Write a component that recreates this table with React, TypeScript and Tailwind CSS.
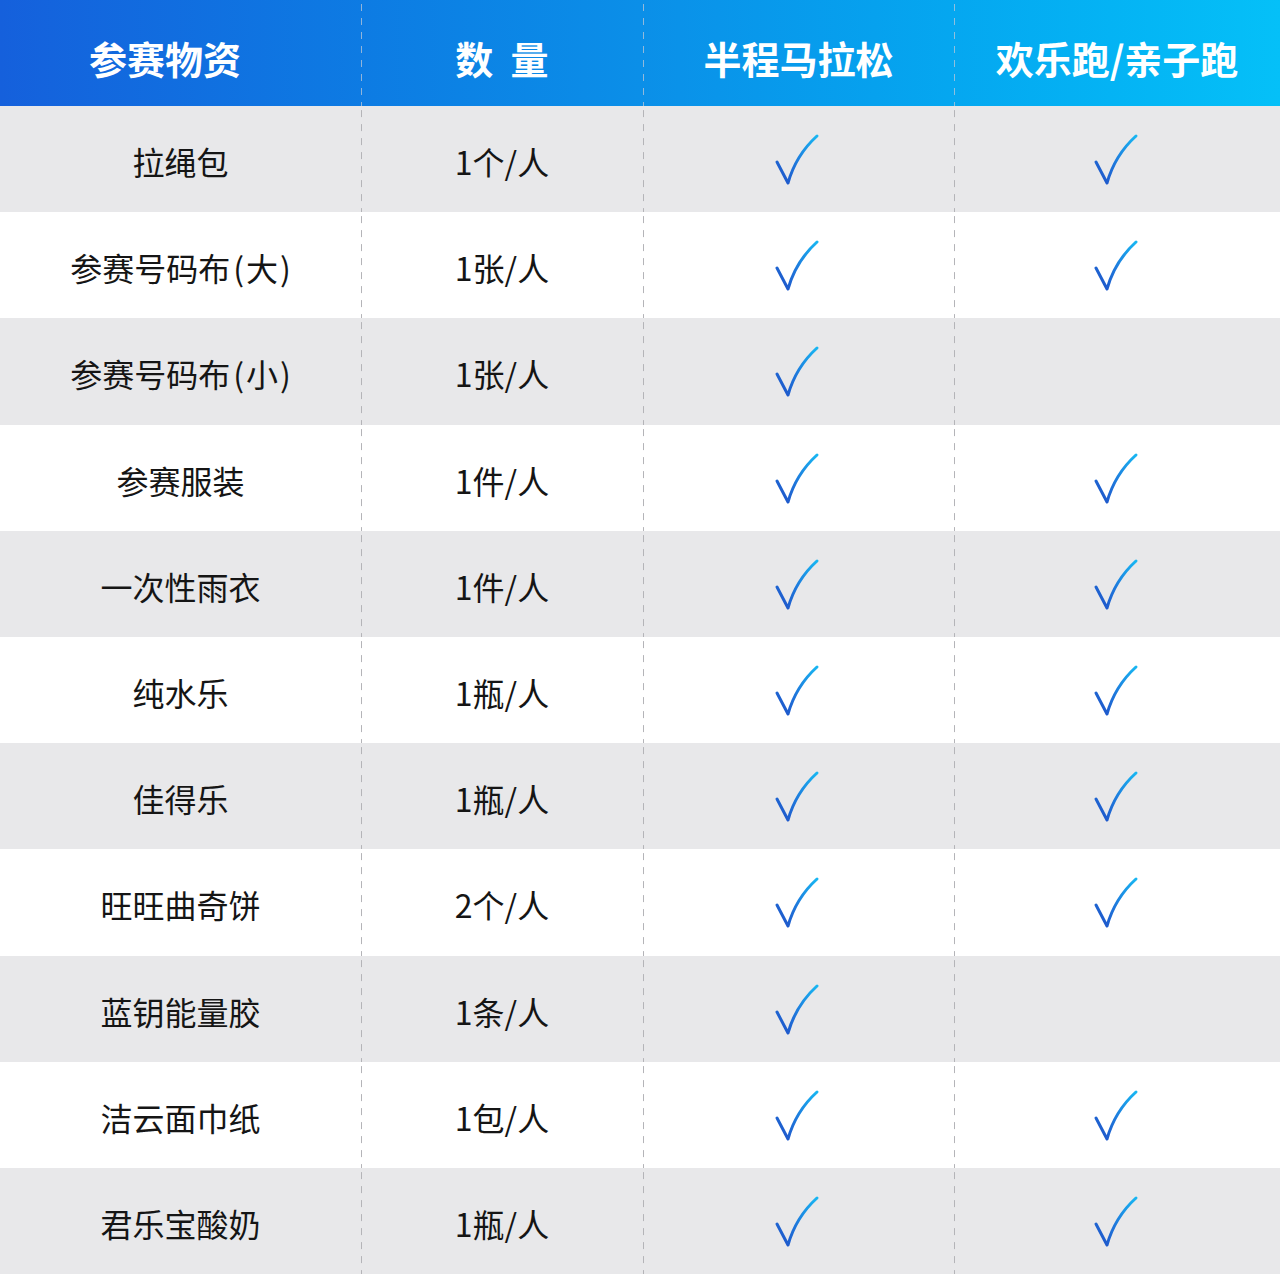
import React from "react";

type Row = { name: string; paren?: string; qty: string; half: boolean; fun: boolean };

const rows: Row[] = [
  { name: "拉绳包", qty: "1个/人", half: true, fun: true },
  { name: "参赛号码布", paren: "大", qty: "1张/人", half: true, fun: true },
  { name: "参赛号码布", paren: "小", qty: "1张/人", half: true, fun: false },
  { name: "参赛服装", qty: "1件/人", half: true, fun: true },
  { name: "一次性雨衣", qty: "1件/人", half: true, fun: true },
  { name: "纯水乐", qty: "1瓶/人", half: true, fun: true },
  { name: "佳得乐", qty: "1瓶/人", half: true, fun: true },
  { name: "旺旺曲奇饼", qty: "2个/人", half: true, fun: true },
  { name: "蓝钥能量胶", qty: "1条/人", half: true, fun: false },
  { name: "洁云面巾纸", qty: "1包/人", half: true, fun: true },
  { name: "君乐宝酸奶", qty: "1瓶/人", half: true, fun: true },
];

function Check({ id }: { id: string }) {
  return (
    <svg width="46" height="54" viewBox="0 0 46 54" className="mt-[2px] -ml-[3px]">
      <defs>
        <linearGradient id={id} x1="0" y1="1" x2="1" y2="0">
          <stop offset="0%" stopColor="#1f4fc6" />
          <stop offset="45%" stopColor="#1e78dc" />
          <stop offset="100%" stopColor="#18b6f2" />
        </linearGradient>
      </defs>
      <path
        d="M3 29 L14 50 Q22 22 43 3"
        fill="none"
        stroke={`url(#${id})`}
        strokeWidth="3"
        strokeLinecap="round"
        strokeLinejoin="round"
      />
    </svg>
  );
}

const dashBody =
  "bg-[linear-gradient(to_bottom,#b4b4b8_50%,transparent_50%)] bg-[length:1px_14px] bg-repeat-y bg-left";
const dashHead =
  "bg-[linear-gradient(to_bottom,rgba(190,200,215,0.75)_50%,transparent_50%)] bg-[length:1px_14px] bg-repeat-y bg-left";

export default function App() {
  return (
    <div
      className="w-[1280px] h-[1274px] flex flex-col"
      style={{ fontFamily: '"Noto Sans CJK SC", "Noto Sans", sans-serif' }}
    >
      <div className="h-[106px] shrink-0 grid grid-cols-[361px_282px_311px_326px] bg-gradient-to-r from-[#1560dc] via-[#0b8fe8] to-[#05c0f8] text-white font-bold text-[38px]">
        <div className="flex items-center justify-center pt-[8px] pr-[31px]">参赛物资</div>
        <div className={`flex items-center justify-center pt-[8px] whitespace-pre ${dashHead}`}>数  量</div>
        <div className={`flex items-center justify-center pt-[8px] ${dashHead}`}>半程马拉松</div>
        <div className={`flex items-center justify-center pt-[8px] ${dashHead}`}>欢乐跑/亲子跑</div>
      </div>
      {rows.map((r, i) => {
        const bg = i % 2 === 0 ? "bg-[#e8e8ea]" : "bg-white";
        return (
          <div
            key={i}
            className={`flex-1 grid grid-cols-[361px_282px_311px_326px] text-[32px] text-[#151515] ${bg}`}
          >
            <div className="flex items-center justify-center pt-[4px]">
              {r.name}
              {r.paren && (
                <>
                  <span className="ml-[3px] mr-[2px]">(</span>
                  {r.paren}
                  <span className="ml-[2px]">)</span>
                </>
              )}
            </div>
            <div className={`flex items-center justify-center pt-[4px] ${dashBody}`}>{r.qty}</div>
            <div className={`flex items-center justify-center ${dashBody}`}>
              {r.half && <Check id={`ch${i}`} />}
            </div>
            <div className={`flex items-center justify-center ${dashBody}`}>
              {r.fun && <Check id={`cf${i}`} />}
            </div>
          </div>
        );
      })}
    </div>
  );
}
